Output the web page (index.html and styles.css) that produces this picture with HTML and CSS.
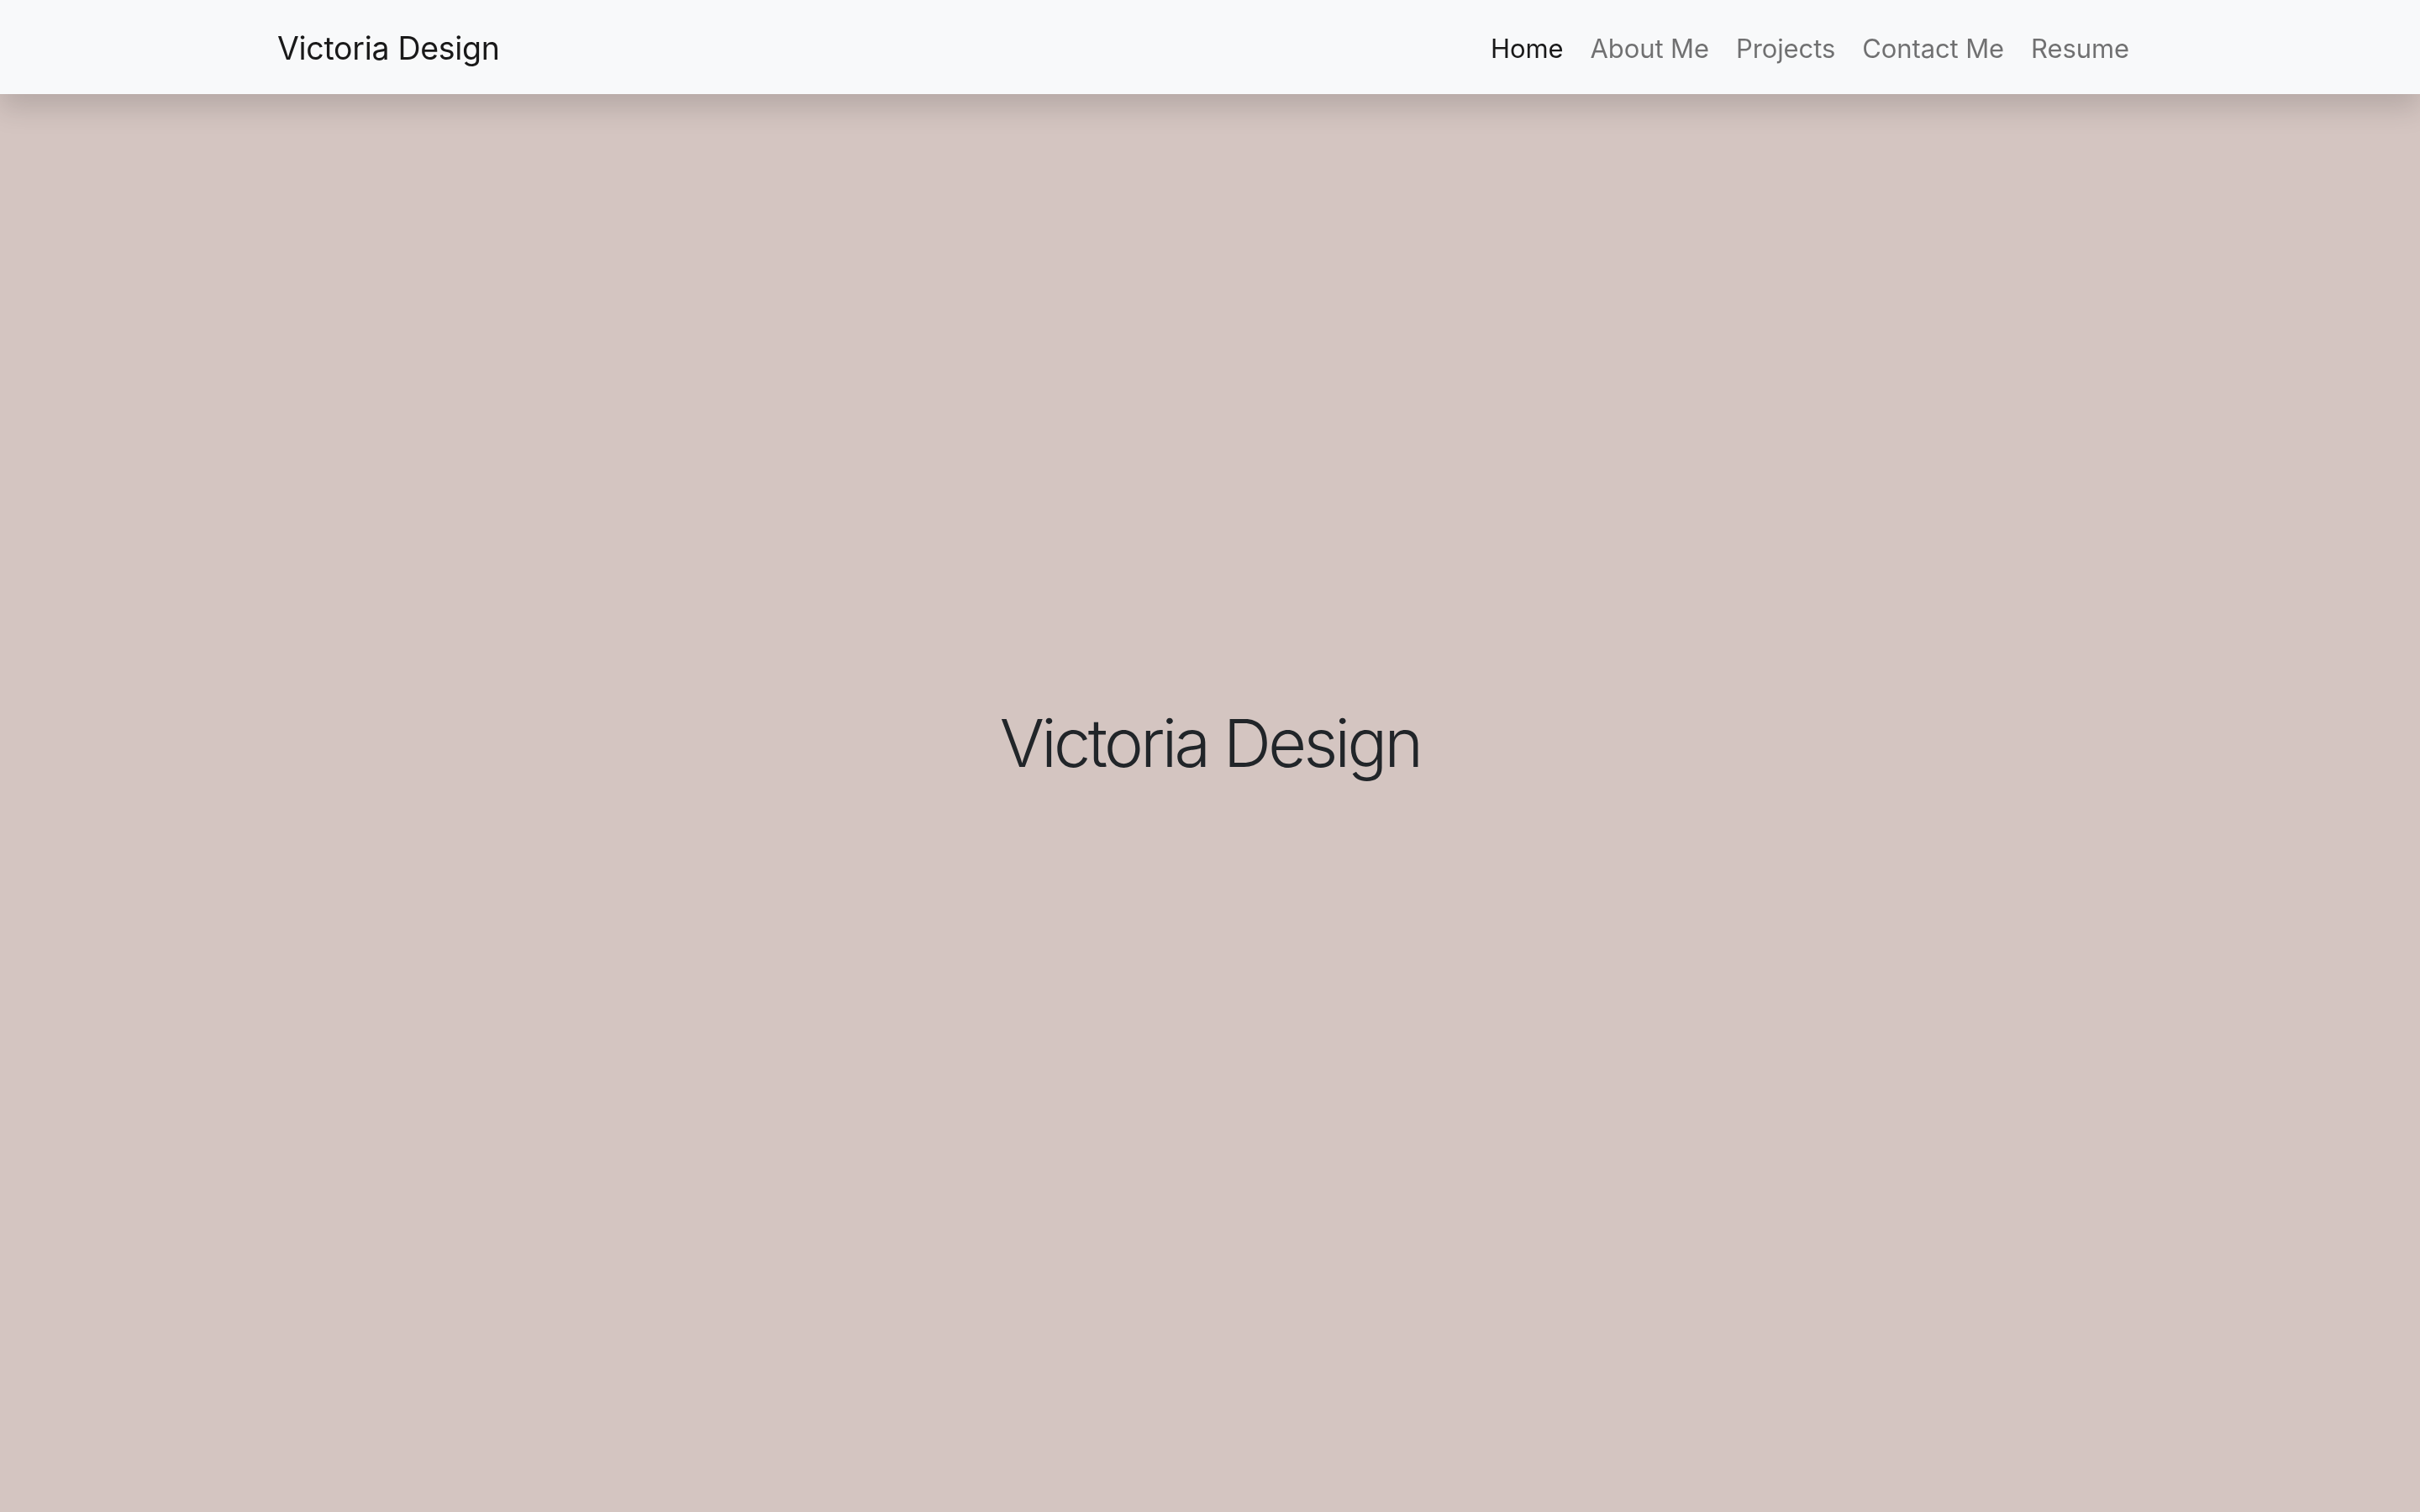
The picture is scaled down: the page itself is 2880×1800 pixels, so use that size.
FILE: index.html
```html
<!DOCTYPE html>
<html lang="en">
<head>
<meta charset="utf-8">
<title>Victoria Design</title>
<link rel="stylesheet" href="styles.css">
</head>
<body>
<nav class="navbar">
  <div class="navbar-inner">
    <a class="brand" href="#">Victoria Design</a>
    <ul class="nav">
      <li><a class="nav-link active" href="#">Home</a></li>
      <li><a class="nav-link" href="#">About Me</a></li>
      <li><a class="nav-link" href="#">Projects</a></li>
      <li><a class="nav-link" href="#">Contact Me</a></li>
      <li><a class="nav-link" href="#">Resume</a></li>
    </ul>
  </div>
</nav>
<header class="hero">
  <h1 class="hero-title">Victoria Design</h1>
</header>
</body>
</html>
```
FILE: styles.css
```css
html, body {
  margin: 0;
  padding: 0;
}
body {
  font-family: Inter, "Noto Sans", "Liberation Sans", sans-serif;
  background: #d4c5c1;
  color: #212529;
}
.navbar {
  position: fixed;
  top: 0;
  left: 0;
  right: 0;
  z-index: 10;
  background: #f8f9fa;
  box-shadow: 0 16px 32px rgba(0, 0, 0, 0.15);
  padding: 18px 0 14px;
}
.navbar-inner {
  width: 2220px;
  margin: 0 auto;
  display: flex;
  align-items: center;
  justify-content: space-between;
}
.brand {
  font-size: 37.5px;
  line-height: 60px;
  padding: 10px 0;
  color: rgba(0, 0, 0, 0.9);
  text-decoration: none;
  letter-spacing: -0.3px;
}
.nav {
  list-style: none;
  margin: 0;
  padding: 0;
  display: flex;
}
.nav-link {
  display: block;
  padding: 16px 16px;
  font-size: 31px;
  line-height: 48px;
  color: rgba(0, 0, 0, 0.55);
  text-decoration: none;
  letter-spacing: -0.1px;
}
.nav-link.active {
  color: rgba(0, 0, 0, 0.9);
}
.hero {
  box-sizing: border-box;
  height: 1800px;
  padding-bottom: 32px;
  display: flex;
  align-items: center;
  justify-content: center;
}
.hero-title {
  margin: 0;
  font-size: 79px;
  font-weight: 300;
  line-height: 1.2;
  color: #212529;
  letter-spacing: -3.6px;
}
```
